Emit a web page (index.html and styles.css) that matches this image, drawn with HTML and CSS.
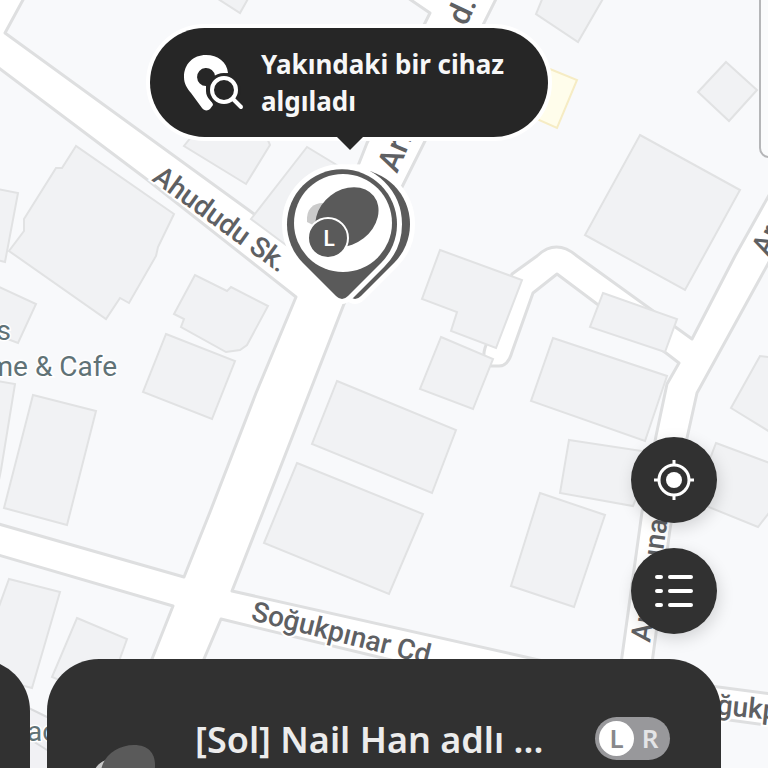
FILE: index.html
```
<!DOCTYPE html>
<html lang="tr">
<head>
<meta charset="utf-8">
<meta name="viewport" content="width=device-width, initial-scale=1">
<title>Cihaz bul</title>
<link rel="stylesheet" href="styles.css">
</head>
<body>
<main class="screen">
  <svg class="map" viewBox="0 0 768 768" preserveAspectRatio="xMinYMin slice" role="img" aria-label="Harita">
    <g class="land">
      <path d="M24-2 5 33 320 262 367 143 424 25 430 13 408-2Z"/>
      <path d="M-5 65 60 114 145 178 296 297 256 393 210 512 184 577-5 523Z"/>
      <path d="M497-3 403 185 344 304 263 512 232 591 512 654 619 678 642 512 656 436 667 384 679 363 666 353 597 304 557 274 533 293 512 352Q508 366 499 366L491 366Q481 362 485 348L512 274 537 256Q556 238 577 256L692 339 735 256 768 197 800 140 800-3Z"/>
      <path d="M780 242 697 393 687 438 670 529 650 678 780 695Z"/>
      <path d="M700 716 780 727 780 780 700 780Z"/>
      <path d="M-5 554 173 606 152 659 110 780-5 780Z"/>
      <path d="M221 619 204 659 160 780 400 780 420 667Z"/>
    </g>
    <path class="plaza" d="M0 694 47 717 70 730 70 768 0 768Z"/>
    <path class="edge" d="M0 694 47 717 70 730M20 733 47 750 70 765"/>
    <g class="building">
      <path d="M215-3 240 13 249-3Z"/>
      <path d="M543-3 536 14 578 42 604-3Z"/>
      <path d="M726 62 757 90 729 121 698 92Z"/>
      <path d="M640 135 740 190 685 290 585 235Z"/>
      <path d="M200 126 184 146 246 184 270 145 262 126Z"/>
      <path d="M307 147 251 219 290 248 345 190 345 170Z"/>
      <path d="M76 146 62 168 56 168 24 219 24 231 9 251 106 319 120 298 129 303 156 256 158 247 174 214Z"/>
      <path d="M-3 189 18 193 5 262-3 260Z"/>
      <path d="M-3 286 36 304 18 343-3 335Z"/>
      <path d="M195 275 174 314 184 319 181 327 226 352 240 350 247 345 268 306 231 287 227 291Z"/>
      <path d="M166 334 235 361 212 419 143 392Z"/>
      <path d="M-3 381 15 384 1 470-3 490Z"/>
      <path d="M33 395 96 411 67 525 4 508Z"/>
      <path d="M440 250 522 280 496 348 451 331 457 312 422 299Z"/>
      <path d="M441 337 493 359 473 409 420 389Z"/>
      <path d="M337 381 456 430 432 493 312 444Z"/>
      <path d="M297 463 423 514 389 594 264 543Z"/>
      <path d="M603 293 677 319 665 352 590 327Z"/>
      <path d="M553 338 667 376 645 441 531 401Z"/>
      <path d="M569 440 655 453 633 506 560 493Z"/>
      <path d="M540 493 605 515 574 607 511 586Z"/>
      <path d="M760 356 731 408 775 435 775 358Z"/>
      <path d="M716 443 775 465 775 505 758 527 694 501Z"/>
      <path d="M9 579 60 592 32 688-3 679-3 612Z"/>
      <path d="M77 618 127 639 105 700 52 677Z"/>
    </g>
    <path class="shop" d="M545 67 577 80 557 128 530 116Z"/>
    <g class="street">
      <text transform="translate(151 180) rotate(36)">Ahududu Sk.</text>
      <text transform="translate(250 620) rotate(14)">Soğukpınar Cd</text>
      <text class="wide" transform="translate(397 174) rotate(-67)">Arı</text>
      <text class="wide" transform="translate(466 27) rotate(-65)">d.</text>
      <text transform="translate(768 257) rotate(-64)">Arı</text>
      <text transform="translate(650 643) rotate(-82)">Arı</text>
      <text transform="translate(660 573) rotate(-82)">pınar</text>
      <text transform="translate(716 714) rotate(6)">ğukp</text>
    </g>
    <g class="place">
      <text x="11" y="340" text-anchor="end">s</text>
      <text x="117" y="376" text-anchor="end">Home &amp; Cafe</text>
      <text x="27" y="741">ac</text>
    </g>
    <rect class="compass" x="760" y="-30" width="60" height="187" rx="9"/>
    <g class="marker">
      <g transform="translate(13 0)">
        <path class="halo" d="M303 263A55 55 0 1 1 381 263L348 296Q342 302 336 296Z"/>
        <path class="dark" d="M303 263A55 55 0 1 1 381 263L348 296Q342 302 336 296Z"/>
      </g>
      <path class="halo" d="M303 263A55 55 0 1 1 381 263L348 296Q342 302 336 296Z"/>
      <path class="dark" d="M303 263A55 55 0 1 1 381 263L348 296Q342 302 336 296Z"/>
      <circle class="white" cx="343" cy="223" r="49"/>
      <path class="light" d="M307 222C306 209 313 203 323 203L323 230Z"/>
      <ellipse class="dark" cx="347" cy="217" rx="34" ry="27" transform="rotate(-38 347 217)"/>
      <circle class="badge" cx="328" cy="238" r="20"/>
      <text class="side" x="329" y="246" text-anchor="middle">L</text>
    </g>
  </svg>

  <section class="bubble" role="status">
    <svg class="bubble-icon" viewBox="0 0 60 56" aria-hidden="true">
      <path class="pin" fill-rule="evenodd" d="M22 0C9 0 0 9 0 22C0 29 3 33 7 38L18 53C20 56 24 56 26 54L29 50C29 46 22 44 22 36L22 31A9 9 0 1 1 31 21L44 18C43 7 34 0 22 0Z"/>
      <circle class="lens-gap" cx="40" cy="35" r="17"/>
      <path class="lens" d="M49 44 57 52"/>
      <circle class="lens" cx="40" cy="35" r="12"/>
    </svg>
    <p class="bubble-text">Yakındaki bir cihaz algıladı</p>
  </section>

  <div class="panel">
    <div class="actions">
      <button class="fab" type="button" aria-label="Konumum">
        <svg viewBox="0 0 42 42" aria-hidden="true"><circle class="line" cx="21" cy="21" r="15"/><circle class="dot" cx="21" cy="21" r="8"/><path class="line" d="M21 1V6M21 36V41M1 21H6M36 21H41"/></svg>
      </button>
      <button class="fab" type="button" aria-label="Cihaz listesi">
        <svg viewBox="0 0 42 42" aria-hidden="true"><path class="row" d="M4 7H8M17 7H38M4 21H8M17 21H38M4 35H8M17 35H38"/></svg>
      </button>
    </div>
    <div class="cards">
      <article class="card card-previous"></article>
      <article class="card card-current">
        <svg class="buds" viewBox="0 0 64 60" aria-hidden="true"><ellipse class="bud-light" cx="20" cy="32" rx="20" ry="18"/><path class="bud-dark" d="M8 28C8 12 24 0 41 0C56 0 62 9 62 20C62 42 50 60 34 60C18 60 8 46 8 28Z"/></svg>
        <h1 class="card-title">[Sol] Nail Han adlı ...</h1>
        <div class="sides"><span class="side-on">L</span><span class="side-off">R</span></div>
      </article>
    </div>
  </div>
</main>
</body>
</html>
```
FILE: styles.css
```
* { box-sizing: border-box; }

body {
  margin: 0;
  font-family: "Noto Sans", "Open Sans", sans-serif;
}

.screen {
  position: relative;
  display: flex;
  flex-direction: column;
  align-items: stretch;
  height: 100vh;
  overflow: hidden;
  background: #fff;
}

.map {
  position: absolute;
  inset: 0;
  width: 100%;
  height: 100%;
}

.land path { fill: #f8f9fb; stroke: #dedfe0; stroke-width: 3; stroke-linejoin: round; }
.plaza { fill: #f1f1f4; }
.edge { fill: none; stroke: #d9dadc; stroke-width: 2; }
.building path { fill: #f1f2f4; stroke: #e1e2e3; stroke-width: 2; }
.shop { fill: #fffdeb; stroke: #f6ecc4; stroke-width: 2; }

.street text {
  font: 500 28px Roboto, sans-serif;
  fill: #5e6063;
  stroke: #fff;
  stroke-width: 4;
  paint-order: stroke;
}
.street .wide { font-size: 32px; }
.place text {
  font: 400 28px Roboto, sans-serif;
  fill: #607276;
  stroke: #fff;
  stroke-width: 3;
  paint-order: stroke;
}
.compass { fill: #fafbfc; stroke: #b5b6b8; stroke-width: 2; }

.halo { fill: #fff; stroke: #fff; stroke-width: 10; stroke-linejoin: round; }
.marker .dark { fill: #5a5a5a; }
.marker .white { fill: #fff; }
.marker .light { fill: #cbcbcb; }
.badge { fill: #5a5a5a; stroke: #fff; stroke-width: 2; }
.side { font: 600 22px "Noto Sans", sans-serif; fill: #fff; }

.bubble {
  position: absolute;
  top: 28px;
  left: 150px;
  display: flex;
  align-items: center;
  gap: 17px;
  width: 398px;
  height: 109px;
  padding: 0 34px;
  border-radius: 55px;
  background: #262626;
  box-shadow: 0 0 0 4px #fff;
}
.bubble::after {
  content: "";
  position: absolute;
  top: 100%;
  left: 186px;
  margin-top: -1px;
  border: 14px solid transparent;
  border-top-color: #262626;
  border-bottom: 0;
}
.bubble-icon { flex: none; width: 60px; height: 56px; }
.pin { fill: #fff; }
.lens-gap { fill: #262626; }
.lens { fill: none; stroke: #fff; stroke-width: 4; stroke-linecap: round; }
.bubble-text {
  flex: none;
  width: 256px;
  margin: 0;
  color: #f7f7f7;
  font-size: 26px;
  font-weight: 700;
  line-height: 37px;
}

.panel {
  position: relative;
  display: flex;
  flex-direction: column;
  gap: 25px;
  margin-top: auto;
}
.actions {
  display: flex;
  flex-direction: column;
  align-items: flex-end;
  gap: 25px;
  padding-right: 51px;
}
.fab {
  display: grid;
  place-items: center;
  width: 86px;
  height: 86px;
  padding: 0;
  border: 0;
  border-radius: 50%;
  background: #313131;
  box-shadow: 2px 5px 16px rgba(0, 0, 0, 0.15);
}
.fab svg { width: 42px; height: 42px; }
.line { fill: none; stroke: #fff; stroke-width: 3; }
.dot { fill: #fff; }
.row { fill: none; stroke: #fff; stroke-width: 4; stroke-linecap: round; }

.cards {
  display: grid;
  grid-template-columns: 30px minmax(0, 1fr);
  gap: 17px;
  height: 109px;
  padding-right: 47px;
}
.card {
  border-radius: 52px 52px 0 0;
  background: #313131;
}
.card-previous { margin-left: -90px; }
.card-current {
  display: flex;
  align-items: flex-start;
  padding: 57px 51px 0 46px;
  overflow: hidden;
}
.buds { flex: none; width: 64px; height: 60px; margin-top: 29px; }
.bud-light { fill: #c8c8c8; }
.bud-dark { fill: #5a5a5a; }
.card-title {
  flex: 1;
  margin: 0 0 0 38px;
  color: #ececec;
  font-size: 36px;
  font-weight: 600;
  line-height: 48px;
  white-space: nowrap;
}
.sides {
  display: flex;
  align-items: center;
  width: 75px;
  height: 43px;
  margin-top: 1px;
  padding: 4px;
  border-radius: 22px;
  background: #98989b;
  color: #e4e4e6;
  font-size: 26px;
  font-weight: 600;
  line-height: 35px;
  text-align: center;
}
.side-on { width: 35px; height: 35px; border-radius: 50%; background: #fff; color: #88888b; }
.side-off { flex: 1; }
```
